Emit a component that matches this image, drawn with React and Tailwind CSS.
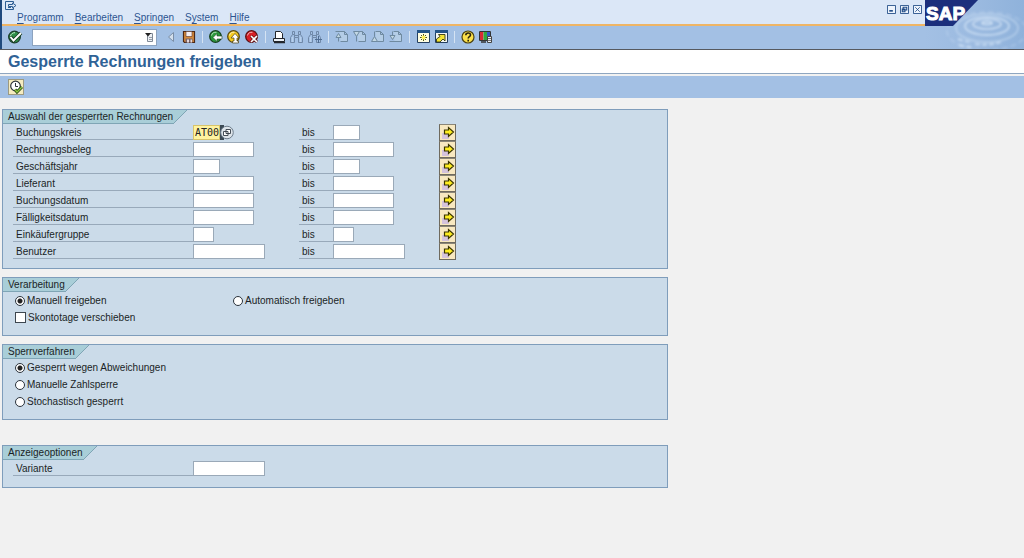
import { useId, useState } from "react";

const ICON = "block size-4 shrink-0";

function Binoculars({ plus }) {
  return (
    <svg viewBox="0 0 16 16" className={ICON} fill="none" stroke="#7089a8">
      <path d="M3.500 2.500h2v3h-2zM9.500 2.500h2v3h-2zM3.500 5.500l-2 3v5h4v-5h4v5h4v-5l-2-3M5.500 5.500v3M9.500 5.500v3M6 6.500h3" />
      <path d="M3.500 8v5M11.500 8v5" stroke="#b9d0ea" />
      {plus && <path d="M11.500 7v7M8 10.500h7" stroke="#4f6c92" />}
    </svg>
  );
}

function PageIcon({ d }) {
  return (
    <svg viewBox="0 0 16 16" className={ICON} fill="none" stroke="#6f8aa0">
      <path d="M5.500 2.500h5l3 3v7h-7M10.500 2.500v3h3" fill="#b4cde6" />
      <path d={d} fill="#c3d8e4" />
    </svg>
  );
}

function Disc({ color, dark, children }) {
  return (
    <svg viewBox="0 0 16 16" className={ICON}>
      <circle cx="7.500" cy="7.500" r="5.800" fill={color} stroke={dark} strokeWidth="1.300" />
      <path d="M3.500 6.500C4 4 6 3 8.500 3.300" fill="none" stroke="#fff" strokeOpacity=".65" />
      {children}
    </svg>
  );
}

const icons = {
  back: (
    <Disc color="#2b9a3a" dark="#173f1c">
      <path d="M5 8.500l4-4v2.500h5v3H9v2.500z" fill="#fff" stroke="#1d3d20" strokeWidth=".6" />
    </Disc>
  ),
  exit: (
    <Disc color="#f5cb1e" dark="#5a4a10">
      <path d="M5 9l4-4.500L13 9h-2v3h1.500v2h-6v-2H8V9z" fill="#fff" stroke="#4a3d10" strokeWidth=".7" />
    </Disc>
  ),
  cancel: (
    <Disc color="#d81f26" dark="#5c1013">
      <path d="M7 7l6 6M13 7l-6 6" stroke="#5c1013" strokeWidth="3" />
      <path d="M7 7l6 6M13 7l-6 6" stroke="#fff" strokeWidth="1.600" />
    </Disc>
  ),
  enter: (
    <svg viewBox="0 0 16 16" className={ICON}>
      <circle cx="7.500" cy="8" r="5.800" fill="#2f8f48" stroke="#1b3d2b" strokeWidth="1.300" />
      <path d="M3.500 7C4 5 6 3.500 8 3.700" fill="none" stroke="#c9efd0" />
      <path d="M3.500 8l3 3.500L14 4" fill="none" stroke="#173c20" strokeWidth="3.600" />
      <path d="M3.500 8l3 3.500L14 4" fill="none" stroke="#fff" strokeWidth="1.900" />
    </svg>
  ),
  collapse: (
    <svg viewBox="0 0 8 16" className="block h-4 w-2 shrink-0">
      <path d="M6.500 3.500v9L1.500 8z" fill="#d3dfec" stroke="#7b8ea6" />
    </svg>
  ),
  save: (
    <svg viewBox="0 0 16 16" className={ICON}>
      <path d="M2.500 2.500h11v11h-10l-1-1z" fill="#d58a3c" stroke="#4b2818" strokeWidth="1.200" />
      <path d="M5 2.500h6v5H5z" fill="#f6eef0" stroke="#5b3425" strokeWidth=".6" />
      <path d="M4.500 9.500h7v4h-7z" fill="#75646c" />
      <path d="M6 10.500h2v3H6zM9.500 10.500h1.500v3H9.500z" fill="#e6d9dc" />
    </svg>
  ),
  print: (
    <svg viewBox="0 0 16 16" className={ICON}>
      <path d="M4.500 9V2.500h5l2 2V9" fill="#fff" stroke="#22262c" />
      <path d="M2.500 9.500h11v3h-11z" fill="#e8eef5" stroke="#22262c" />
      <path d="M3 13.500h11" stroke="#22262c" strokeWidth="1.500" />
    </svg>
  ),
  find: <Binoculars />,
  findNext: <Binoculars plus />,
  first: <PageIcon d="M1.500 2.500h6M2 8.500L4.500 4.500l2.500 4z M4.500 8.500v4" />,
  previous: <PageIcon d="M1.500 2.500h6L4.500 7.500zM4.500 7.500v5" />,
  next: <PageIcon d="M1.500 12.500h6L4.500 7.500zM4.500 7.500v-5" />,
  last: <PageIcon d="M1.500 12.500h6M2 6.500l2.500 4 2.500-4z M4.500 6.500v-4" />,
  session: (
    <svg viewBox="0 0 16 16" className={ICON}>
      <path d="M2.500 1.500h12v12h-12z" fill="#fffde0" stroke="#243f60" />
      <path d="M2 1h13v3H2z" fill="#245487" />
      <path d="M8.500 5v7M5 8.500h7M6 6l5 5M11 6l-5 5" stroke="#4d5415" />
      <circle cx="8.500" cy="8.500" r="1.900" fill="#fff35a" />
    </svg>
  ),
  shortcut: (
    <svg viewBox="0 0 16 16" className={ICON}>
      <path d="M2.500 1.500h12v12h-12z" fill="#f5f7f1" stroke="#243f60" />
      <path d="M2 1h13v3H2z" fill="#245487" />
      <path d="M3.500 13v-3L7 7.500 5.500 5.500h6.500V12l-2-2-3 3z" fill="#f4e535" stroke="#333813" strokeWidth=".9" />
    </svg>
  ),
  help: (
    <svg viewBox="0 0 16 16" className={ICON}>
      <circle cx="8" cy="8" r="6" fill="#fbe04a" stroke="#4c4210" strokeWidth="1.200" />
      <path d="M5.800 6.300c0-3 4.700-3 4.700-.3 0 1.700-2.300 1.700-2.300 3.500M8.200 10.800v1.700" fill="none" stroke="#2b260d" strokeWidth="1.600" />
    </svg>
  ),
  layout: (
    <svg viewBox="0 0 16 16" className={ICON}>
      <path d="M1.500 2.500h11v9h-11z" fill="#fff" stroke="#333" />
      <path d="M2 3h3.500v8H2z" fill="#d92b35" />
      <path d="M5.500 3H9v8H5.500z" fill="#2fa83f" />
      <path d="M9 3h3v8H9z" fill="#3657c4" />
      <path d="M3 13h5" stroke="#333" strokeWidth="1.500" />
      <path d="M9.500 7.500h4v6h-4z" fill="#eef1f4" stroke="#444" />
      <path d="M10 9.500h3M10 11.500h3" stroke="#555" strokeWidth=".8" />
    </svg>
  ),
};

function ToolButton({ label, icon, disabled }) {
  return (
    <button type="button" aria-label={label} disabled={disabled} className="flex shrink-0 items-center">
      {icons[icon]}
    </button>
  );
}

function Separator() {
  return <span className="h-3 w-px shrink-0 bg-[#d5e3f3]" />;
}

function SystemMenuIcon() {
  return (
    <svg viewBox="0 0 12 10" className="block h-2.5 w-3" fill="none" stroke="#2c5d93">
      <path d="M8.500 2V.500h-8v8h8V7M3 6.500h3" />
      <path d="M3.500 3.500h4V2l3.500 2.500L7.500 7V5.500h-4z" fill="#dbe7f7" />
    </svg>
  );
}

function Menu() {
  return (
    <nav className="flex gap-[11px] pt-px pl-[15px] text-[10px] leading-3 text-[#2d5591]">
      {[
        ["", "P", "rogramm"],
        ["", "B", "earbeiten"],
        ["", "S", "pringen"],
        ["S", "y", "stem"],
        ["", "H", "ilfe"],
      ].map(([pre, key, rest]) => (
        <button type="button" key={key}>
          {pre}
          <span className="underline underline-offset-2">{key}</span>
          {rest}
        </button>
      ))}
    </nav>
  );
}

function WindowButtons() {
  const shapes = [
    ["Minimieren", "M2.500 6.500h4"],
    ["Wiederherstellen", "M3.500 2.500h4v3h-4zM2.500 4.500h3v3h-3z"],
    ["Schließen", "M2.500 2.500l5 5M7.500 2.500l-5 5"],
  ];
  return (
    <div className="flex items-start gap-1 pt-[5px] pr-[3px]">
      {shapes.map(([label, d], i) => (
        <button type="button" key={label} aria-label={label}>
          <svg viewBox="0 0 10 10" className="block size-[9px]" fill="#eef4fc" stroke="#1e4a86">
            <path d="M.5.5h9v9h-9z" />
            <path d={d} strokeWidth={i === 0 ? 1.8 : i === 1 ? 1.2 : 0.9} />
          </svg>
        </button>
      ))}
    </div>
  );
}

function Brand() {
  return (
    <svg viewBox="0 0 99 49" className="block h-[49px] w-[99px] shrink-0" role="img" aria-label="SAP">
      <defs>
        <linearGradient id="water" x1="0" x2="1" y1="0" y2="0">
          <stop offset="0" stopColor="#a3c0e4" />
          <stop offset=".5" stopColor="#9bbae0" />
          <stop offset="1" stopColor="#8fb2db" />
        </linearGradient>
        <filter id="soft">
          <feGaussianBlur stdDeviation=".8" />
        </filter>
      </defs>
      <path d="M0 0h99v49H0z" fill="url(#water)" />
      <g fill="none" stroke="#d3e4f6" filter="url(#soft)">
        <ellipse cx="62" cy="23" rx="5" ry="1.500" strokeWidth="1.500" />
        <ellipse cx="62" cy="24" rx="14" ry="5" strokeWidth="1.600" strokeOpacity=".8" />
        <ellipse cx="62" cy="26" rx="22" ry="9" strokeWidth="2" strokeOpacity=".7" />
        <ellipse cx="62" cy="28" rx="31" ry="14" strokeWidth="1.800" strokeOpacity=".45" />
        <ellipse cx="62" cy="31" rx="40" ry="19" strokeWidth="2" strokeDasharray="6 3" strokeOpacity=".25" />
        <path d="M33 39q8 3 14 3M50 44q14 2 26-2M34 45q8 2 14 2" strokeWidth="2.500" strokeDasharray="5 2" strokeOpacity=".6" />
      </g>
      <path d="M0 0h53L28 26H0z" fill="#1c2f7c" />
      <text x="1" y="20" fill="#fff" stroke="#fff" strokeWidth="1" className="font-['Liberation_Sans',sans-serif] text-[19px] font-bold">
        SAP
      </text>
    </svg>
  );
}

function Group({ title, className, children }) {
  const id = useId();
  return (
    <section aria-labelledby={id} className={`border border-[#7f9dbb] bg-[#cbdbe9] ${className}`}>
      <div className="flex h-[14px]">
        <h2 id={id} className="border-b border-[#7fa5b5] bg-[#a9ced8] pl-[5px] leading-[13px]">
          {title}
        </h2>
        <svg viewBox="0 0 14 14" className="block size-[14px]">
          <path d="M0 0h14L0 14z" fill="#a9ced8" />
          <path d="M14 0L0 14" stroke="#7fa5b5" />
        </svg>
      </div>
      {children}
    </section>
  );
}

const WIDTHS = {
  xs: "w-[21px]",
  sm: "w-[27px]",
  md: "w-[61px]",
  lg: "w-[72px]",
};

function Field({ id, size }) {
  return (
    <input
      id={id}
      type="text"
      className={`block h-[15px] border border-[#9aa9b8] bg-white px-0.5 font-['Liberation_Mono',monospace] text-[10px] outline-none ${WIDTHS[size]}`}
    />
  );
}

function CompanyField({ id }) {
  return (
    <div className="flex">
      <input
        id={id}
        type="text"
        defaultValue="AT00"
        className="block h-[15px] w-[27px] border border-[#d8c46a] bg-[#fff3a0] pl-px font-['DejaVu_Sans_Mono',monospace] text-[10px] text-[#222] outline-none"
      />
      <button type="button" aria-label="Wertehilfe">
        <svg viewBox="0 0 14 15" className="block h-[15px] w-[14px]">
          <path d="M0 0h4v15H0z" fill="#3c4a55" />
          <circle cx="7" cy="7.500" r="6.300" fill="#dde4ea" stroke="#6f7e8d" />
          <path d="M6 4.500h4.500v4H6zM3.500 6.500h4.500v4H3.500z" fill="#fff" stroke="#333c46" strokeWidth=".9" />
        </svg>
      </button>
    </div>
  );
}

function MultiSelect({ label }) {
  return (
    <button type="button" aria-label={label} className="h-[17px] w-[17px] border border-[#6f6a5e] border-t-[#8b8678] bg-[#f8e8c0]">
      <svg viewBox="0 0 15 15" className="block size-[15px]">
        <path d="M2 8h7v6H2z" fill="#d5c3dc" />
        <path d="M4.500 5h4V2.500l5 4.500-5 4.500V9h-4z" fill="#ffee20" stroke="#3b3500" strokeWidth="1.200" />
      </svg>
    </button>
  );
}

function LabelCell({ htmlFor, children }) {
  return (
    <label htmlFor={htmlFor} className="h-[15px] w-[180px] border-b border-[#98a9ba] pl-[3px] leading-[15px]">
      {children}
    </label>
  );
}

function RangeRow({ label, size, company }) {
  const id = useId();
  return (
    <div className="flex h-[17px] items-center pl-[10px]">
      <LabelCell htmlFor={id}>{label}</LabelCell>
      <div className="w-[106px]">{company ? <CompanyField id={id} /> : <Field id={id} size={size} />}</div>
      <label htmlFor={`${id}-to`} className="h-[15px] w-[34px] border-b border-[#98a9ba] pl-[3px] leading-[15px]">
        bis
      </label>
      <div className="w-[106px]">
        <Field id={`${id}-to`} size={size} />
      </div>
      <MultiSelect label={`Mehrfachselektion ${label}`} />
    </div>
  );
}

function Radio({ name, value, selected, onSelect, className = "" }) {
  return (
    <label className={`flex h-[17px] items-center gap-0.5 ${className}`}>
      <input
        type="radio"
        name={name}
        checked={selected === value}
        onChange={() => onSelect(value)}
        className="size-[10px] appearance-none rounded-full border border-[#2b333c] bg-white checked:bg-[radial-gradient(circle,#222_0_2px,#fff_3px)]"
      />
      {value}
    </label>
  );
}

export default function App() {
  const [release, setRelease] = useState("Manuell freigeben");
  const [block, setBlock] = useState("Gesperrt wegen Abweichungen");
  const variant = useId();

  return (
    <div className="min-h-screen bg-[#f1f1f1] font-['Liberation_Sans',sans-serif] text-[10px] text-[#1a1f26]">
      <header className="flex border-b border-[#56595f] bg-[#a3c0e4]">
        <div className="min-w-0 flex-1 border-l-2 border-[#1f4a7e]">
          <div className="flex h-[26px] justify-between border-b-2 border-[#efb565] bg-[#dbe7f7]">
            <div>
              <button type="button" aria-label="Systemmenü" className="block pt-px pl-[3px]">
                <SystemMenuIcon />
              </button>
              <Menu />
            </div>
            <WindowButtons />
          </div>
          <div className="flex h-[23px] items-center pb-px pl-[5px]">
            <ToolButton label="Weiter" icon="enter" />
            <div className="ml-[9px] flex h-[17px] w-[125px] items-center border border-[#8ca3bf] bg-white">
              <input type="text" aria-label="Befehlsfeld" className="h-[15px] min-w-0 flex-1 px-1 outline-none" />
              <button type="button" aria-label="Befehlsliste">
                <svg viewBox="0 0 10 10" className="mr-0.5 block size-2.5">
                  <path d="M3.500 1.500h5v8h-5z" fill="#eef1f5" stroke="#7f8996" />
                  <path d="M1 1h6L4 4.500z" fill="#222" />
                  <path d="M5 5.500h3M5 7.500h3" stroke="#7f8996" strokeWidth=".8" />
                </svg>
              </button>
            </div>
            <div className="flex items-center gap-[5px] pl-[10px]">
              <div className="flex gap-1.5">
                <ToolButton label="Befehlsfeld schließen" icon="collapse" />
                <ToolButton label="Sichern" icon="save" />
              </div>
              <Separator />
              <div className="flex gap-0.5">
                <ToolButton label="Zurück" icon="back" />
                <ToolButton label="Beenden" icon="exit" />
                <ToolButton label="Abbrechen" icon="cancel" />
              </div>
              <Separator />
              <div className="flex gap-0.5">
                <ToolButton label="Drucken" icon="print" />
                <ToolButton label="Suchen" icon="find" disabled />
                <ToolButton label="Weitersuchen" icon="findNext" disabled />
              </div>
              <Separator />
              <div className="flex gap-0.5">
                <ToolButton label="Erste Seite" icon="first" disabled />
                <ToolButton label="Vorige Seite" icon="previous" disabled />
                <ToolButton label="Nächste Seite" icon="next" disabled />
                <ToolButton label="Letzte Seite" icon="last" disabled />
              </div>
              <Separator />
              <div className="flex gap-0.5">
                <ToolButton label="Neuer Modus" icon="session" />
                <ToolButton label="Verknüpfung anlegen" icon="shortcut" />
              </div>
              <Separator />
              <div className="flex gap-0.5">
                <ToolButton label="Hilfe" icon="help" />
                <ToolButton label="Lokales Layout anpassen" icon="layout" />
              </div>
            </div>
          </div>
        </div>
        <Brand />
      </header>

      <h1 className="h-6 border-b border-[#8fa6c0] bg-white pl-2 text-[16px] leading-6 font-bold text-[#2f6296]">
        Gesperrte Rechnungen freigeben
      </h1>
      <div className="mt-0.5 flex h-[22px] items-center bg-[#a3c0e4] pl-2">
        <button type="button" aria-label="Ausführen" className="border border-[#9d9a80] bg-[#f5ecc0]">
          <svg viewBox="0 0 14 14" className="block size-[14px]">
            <circle cx="6.500" cy="6" r="4.800" fill="#fff" stroke="#2b3138" strokeWidth="1.200" />
            <path d="M6.500 3v3.500H9" fill="none" stroke="#2b3138" />
            <path d="M6 9.500l2 2.500 5-5" fill="none" stroke="#274a16" strokeWidth="3" />
            <path d="M6 9.500l2 2.500 5-5" fill="none" stroke="#8cc63f" strokeWidth="1.300" />
          </svg>
        </button>
      </div>

      <main className="max-w-[668px] pt-[11px] pl-0.5">
        <form>
          <Group title="Auswahl der gesperrten Rechnungen" className="pb-2">
            <RangeRow label="Buchungskreis" size="sm" company />
            <RangeRow label="Rechnungsbeleg" size="md" />
            <RangeRow label="Geschäftsjahr" size="sm" />
            <RangeRow label="Lieferant" size="md" />
            <RangeRow label="Buchungsdatum" size="md" />
            <RangeRow label="Fälligkeitsdatum" size="md" />
            <RangeRow label="Einkäufergruppe" size="xs" />
            <RangeRow label="Benutzer" size="lg" />
          </Group>

          <Group title="Verarbeitung" className="mt-2 pb-[9px]">
            <div className="flex pl-3">
              <Radio name="release" value="Manuell freigeben" selected={release} onSelect={setRelease} className="w-[218px]" />
              <Radio name="release" value="Automatisch freigeben" selected={release} onSelect={setRelease} />
            </div>
            <label className="flex h-[17px] items-center gap-0.5 pl-3">
              <input type="checkbox" className="size-[11px] appearance-none border border-[#3d464f] bg-white checked:bg-[#222]" />
              Skontotage verschieben
            </label>
          </Group>

          <Group title="Sperrverfahren" className="mt-2 pb-[9px]">
            <div className="pl-3">
              {["Gesperrt wegen Abweichungen", "Manuelle Zahlsperre", "Stochastisch gesperrt"].map((value) => (
                <Radio key={value} name="block" value={value} selected={block} onSelect={setBlock} />
              ))}
            </div>
          </Group>

          <Group title="Anzeigeoptionen" className="mt-[25px] pb-[10px]">
            <div className="flex h-[17px] items-center pl-[10px]">
              <LabelCell htmlFor={variant}>Variante</LabelCell>
              <Field id={variant} size="lg" />
            </div>
          </Group>
        </form>
      </main>
    </div>
  );
}
